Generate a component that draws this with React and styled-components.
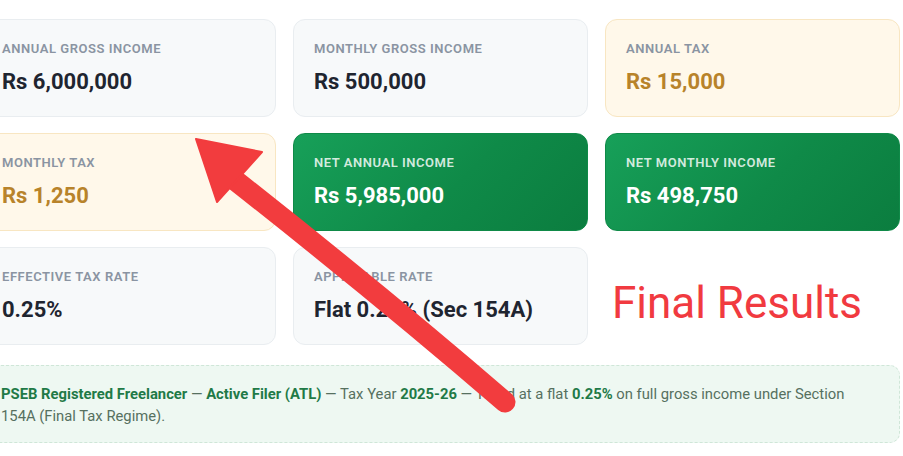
import React from 'react'
import styled, { createGlobalStyle, css } from 'styled-components'

const GlobalStyle = createGlobalStyle`
  html, body {
    margin: 0;
    padding: 0;
    background: #ffffff;
    overflow: hidden;
  }
  body {
    font-family: Roboto, "Liberation Sans", Arial, sans-serif;
  }
`

const Page = styled.div`
  position: relative;
  width: 903px;
  height: 456px;
  overflow: hidden;
`

const Content = styled.div`
  width: 919px;
  margin-left: -19px;
  padding-top: 19px;
  display: flex;
  flex-direction: column;
  gap: 20px;
`

const Grid = styled.div`
  display: grid;
  grid-template-columns: repeat(3, 295px);
  grid-auto-rows: 98px;
  column-gap: 17px;
  row-gap: 16px;
`

const tones = {
  plain: css`
    background: #f7f9fa;
    border: 1px solid #e9edf0;
  `,
  warn: css`
    background: #fff8ea;
    border: 1px solid #f8e6c2;
  `,
  good: css`
    background: linear-gradient(135deg, #17a059 0%, #0f8a48 55%, #0b7d3f 100%);
    border: 1px solid #0f8a48;
  `,
}

const Card = styled.div`
  box-sizing: border-box;
  border-radius: 12px;
  padding: 21px 20px 0 20px;
  display: flex;
  flex-direction: column;
  ${p => tones[p.$tone]}
`

const Label = styled.div`
  font-size: 13px;
  line-height: 16px;
  font-weight: 600;
  letter-spacing: 0.55px;
  text-transform: uppercase;
  color: ${p => (p.$tone === 'good' ? 'rgba(255,255,255,0.82)' : '#8a94a2')};
`

const Value = styled.div`
  margin-top: 12px;
  font-size: 22px;
  line-height: 26px;
  font-weight: 700;
  color: ${p =>
    p.$tone === 'good' ? '#ffffff' : p.$tone === 'warn' ? '#b8832a' : '#1f2530'};
`

const Annotation = styled.div`
  display: flex;
  align-items: center;
  padding-left: 7px;
  padding-top: 14px;
  font-size: 44px;
  font-weight: 400;
  color: #f13a40;
`

const Notice = styled.div`
  box-sizing: border-box;
  height: 78px;
  padding: 17px 40px 17px 19px;
  background: #eef8f2;
  border: 1px dashed #cfe6d8;
  border-radius: 10px;
  font-size: 14.8px;
  line-height: 22px;
  color: #56705f;
`

const Strong = styled.b`
  font-weight: 700;
  color: #1f7a47;
`

const Overlay = styled.svg`
  position: absolute;
  left: 0;
  top: 0;
  pointer-events: none;
`

const results = [
  { label: 'Annual Gross Income', value: 'Rs 6,000,000', tone: 'plain' },
  { label: 'Monthly Gross Income', value: 'Rs 500,000', tone: 'plain' },
  { label: 'Annual Tax', value: 'Rs 15,000', tone: 'warn' },
  { label: 'Monthly Tax', value: 'Rs 1,250', tone: 'warn' },
  { label: 'Net Annual Income', value: 'Rs 5,985,000', tone: 'good' },
  { label: 'Net Monthly Income', value: 'Rs 498,750', tone: 'good' },
  { label: 'Effective Tax Rate', value: '0.25%', tone: 'plain' },
  { label: 'Applicable Rate', value: 'Flat 0.25% (Sec 154A)', tone: 'plain' },
]

export default function App() {
  return (
    <Page>
      <GlobalStyle />
      <Content>
        <Grid>
          {results.map(r => (
            <Card key={r.label} $tone={r.tone}>
              <Label $tone={r.tone}>{r.label}</Label>
              <Value $tone={r.tone}>{r.value}</Value>
            </Card>
          ))}
          <Annotation>Final Results</Annotation>
        </Grid>
        <Notice>
          <Strong>PSEB Registered Freelancer</Strong> — <Strong>Active Filer (ATL)</Strong> — Tax Year{' '}
          <Strong>2025-26</Strong> — Taxed at a flat <Strong>0.25%</Strong> on full gross income under Section
          154A (Final Tax Regime).
        </Notice>
      </Content>

      <Overlay width="903" height="456" viewBox="0 0 903 456">
        <path
          d="M 505 402 Q 382 296 236 181"
          fill="none"
          stroke="#f23c3e"
          strokeWidth="21"
          strokeLinecap="round"
        />
        <path
          d="M 196 139 L 262 152 L 217 202 Z"
          fill="#f23c3e"
          stroke="#f23c3e"
          strokeWidth="2"
          strokeLinejoin="round"
        />
      </Overlay>
    </Page>
  )
}
